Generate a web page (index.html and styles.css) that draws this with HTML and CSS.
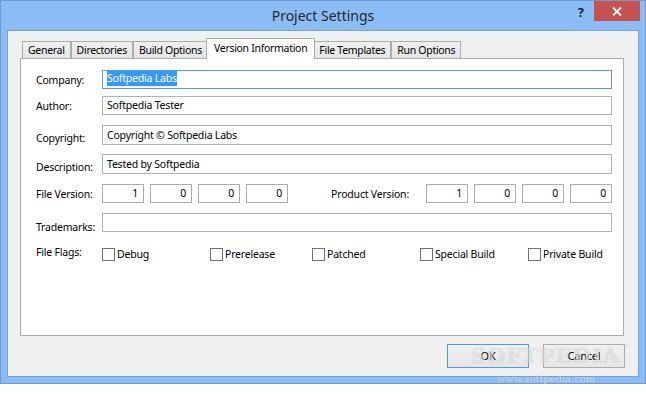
FILE: index.html
```html
<html>
<head>
  <title>Project Settings</title>
  <meta http-equiv="Content-Type" content="text/html; charset=utf-8">
  <link rel="stylesheet" href="styles.css">
</head>
<body>
  <div class="window">
    <div class="titlebar">
      <div></div>
      <div class="title">Project Settings</div>
      <div class="controls">
        <span class="help">?</span>
        <span class="close">
          <svg width="10" height="9" viewBox="0 0 10 9"><path d="M1 0.5 L9 8.5 M9 0.5 L1 8.5" stroke="#fff" stroke-width="1.8" fill="none"/></svg>
        </span>
      </div>
    </div>
    <div class="client">
      <div class="tabs">
        <div class="tab">General</div>
        <div class="tab">Directories</div>
        <div class="tab">Build Options</div>
        <div class="tab active">Version Information</div>
        <div class="tab">File Templates</div>
        <div class="tab">Run Options</div>
      </div>
      <div class="panel">
        <div class="row r-company">
          <div class="lbl">Company:</div>
          <div class="field focus"><span class="sel">Softpedia Labs</span></div>
        </div>
        <div class="row r-author">
          <div class="lbl">Author:</div>
          <div class="field">Softpedia Tester</div>
        </div>
        <div class="row r-copy">
          <div class="lbl lbl-low">Copyright:</div>
          <div class="field tall">Copyright © Softpedia Labs</div>
        </div>
        <div class="row r-desc">
          <div class="lbl lbl-low">Description:</div>
          <div class="field tall">Tested by Softpedia</div>
        </div>
        <div class="row r-version">
          <div class="lbl">File Version:</div>
          <div class="nums">
            <div class="num">1</div>
            <div class="num">0</div>
            <div class="num">0</div>
            <div class="num">0</div>
          </div>
          <div class="lbl prod-lbl">Product Version:</div>
          <div class="nums">
            <div class="num">1</div>
            <div class="num">0</div>
            <div class="num">0</div>
            <div class="num">0</div>
          </div>
        </div>
        <div class="row r-trade">
          <div class="lbl lbl-lower">Trademarks:</div>
          <div class="field"></div>
        </div>
        <div class="row r-flags">
          <div class="lbl flags-lbl">File Flags:</div>
          <div class="flags">
            <div class="flag"><span class="check"></span>Debug</div>
            <div class="flag"><span class="check"></span>Prerelease</div>
            <div class="flag"><span class="check"></span>Patched</div>
            <div class="flag"><span class="check"></span>Special Build</div>
            <div class="flag"><span class="check"></span>Private Build</div>
          </div>
        </div>
      </div>
      <div class="buttons">
        <div class="btn default">OK</div>
        <div class="btn">Cancel</div>
      </div>
    </div>
    <div class="watermark">
      <div class="wm-logo">SOFTPEDIA<sup>™</sup></div>
      <div class="wm-url">www.softpedia.com</div>
    </div>
  </div>
</body>
</html>
```

FILE: styles.css
```css
html {
  box-sizing: border-box;
}
*, *:before, *:after {
  box-sizing: inherit;
}
body {
  margin: 0;
  padding: 0;
  width: 646px;
  height: 395px;
  background: #fff;
  font-family: "Noto Sans", "Open Sans", sans-serif;
  font-size: 10.5px;
  letter-spacing: -0.2px;
  color: #000;
}
.window {
  position: relative;
  width: 646px;
  height: 384px;
  border: 1px solid #6f9bcf;
  background: #8abcf6;
}
.titlebar {
  height: 29px;
  display: grid;
  grid-template-columns: 1fr auto 1fr;
}
.title {
  font-size: 14px;
  letter-spacing: 0;
  line-height: 29px;
  color: #262626;
}
.controls {
  justify-self: end;
  display: flex;
  align-items: flex-start;
}
.help {
  margin-top: 3px;
  margin-right: 10px;
  font-size: 13px;
  font-weight: bold;
  letter-spacing: 0;
  color: #222;
  line-height: 16px;
}
.close {
  width: 46px;
  height: 20px;
  margin-right: 5px;
  background: #c75050;
  display: flex;
  align-items: center;
  justify-content: center;
}
.close svg {
  display: block;
  margin-top: 1px;
}
.client {
  margin: 0 6px 6px;
  height: 347px;
  border: 1px solid #74a2d8;
  background: #f0f0f0;
  padding: 7px 14px 0 12px;
}
.tabs {
  display: flex;
  align-items: flex-end;
  height: 20px;
  padding-left: 2px;
  position: relative;
  z-index: 1;
  letter-spacing: -0.3px;
}
.tab {
  height: 17px;
  line-height: 16px;
  padding: 0 5px;
  border: 1px solid #acacac;
  border-bottom: none;
  background: linear-gradient(#f0f0f0, #e5e5e5);
  white-space: nowrap;
}
.tab.active {
  height: 21px;
  line-height: 19px;
  margin: 0 -2px -1px;
  padding: 0 7px;
  background: #fff;
  position: relative;
  z-index: 2;
}
.panel {
  height: 278px;
  border: 1px solid #acacac;
  background: #fff;
  padding: 11px 11px 0 15px;
}
.row {
  display: flex;
  align-items: flex-start;
  height: 19px;
}
.lbl {
  width: 66px;
  flex: none;
  line-height: 19px;
  margin-top: 1px;
  white-space: nowrap;
}
.lbl-low {
  margin-top: 4px;
}
.lbl-lower {
  margin-top: 5px;
}
.field {
  flex: 1;
  height: 19px;
  border: 1px solid #abb3bf;
  padding-left: 4px;
  line-height: 17px;
  white-space: nowrap;
}
.field.tall {
  height: 20px;
  line-height: 18px;
}
.field.focus {
  border-color: #569de5;
}
.sel {
  display: inline-block;
  background: #3399ff;
  color: #fff;
  line-height: 15px;
  vertical-align: top;
}
.r-author {
  margin-top: 7px;
}
.r-copy {
  margin-top: 10px;
  height: 20px;
}
.r-desc {
  margin-top: 9px;
  height: 20px;
}
.r-version {
  margin-top: 10px;
}
.r-trade {
  margin-top: 10px;
}
.r-flags {
  margin-top: 16px;
  height: 13px;
  align-items: center;
}
.nums {
  display: flex;
  gap: 6px;
}
.num {
  width: 42px;
  height: 19px;
  border: 1px solid #acacac;
  text-align: right;
  padding-right: 5px;
  line-height: 17px;
}
.prod-lbl {
  width: auto;
  margin-left: auto;
  margin-right: 17px;
}
.flags-lbl {
  margin-top: 0;
  margin-bottom: 4px;
}
.flags {
  flex: 1;
  display: grid;
  grid-template-columns: 108px 102px 108px 108px auto;
}
.flag {
  display: flex;
  align-items: center;
  height: 13px;
  line-height: 13px;
  white-space: nowrap;
}
.check {
  width: 13px;
  height: 13px;
  border: 1px solid #707070;
  background: #fff;
  margin-right: 2px;
  flex: none;
}
.buttons {
  display: flex;
  justify-content: flex-end;
  gap: 14px;
  margin-top: 8px;
  margin-right: -1px;
}
.btn {
  width: 82px;
  height: 24px;
  border: 1px solid #acacac;
  background: linear-gradient(#f0f0f0, #e5e5e5);
  text-align: center;
  line-height: 22px;
  font-size: 11px;
}
.btn.default {
  border-color: #4b9ae6;
}
.watermark {
  position: absolute;
  left: 470px;
  top: 340px;
  width: 150px;
  pointer-events: none;
  text-align: center;
}
.wm-logo {
  font-family: "DejaVu Serif", serif;
  font-size: 21px;
  font-weight: bold;
  letter-spacing: 1px;
  line-height: 30px;
  color: rgba(255, 255, 255, 0.5);
  text-shadow: 0 0 1px rgba(90, 90, 90, 0.3);
}
.wm-logo sup {
  font-size: 9px;
  vertical-align: top;
  line-height: 12px;
}
.wm-url {
  font-family: "DejaVu Serif", serif;
  font-size: 10px;
  letter-spacing: 0;
  line-height: 12px;
  margin-top: 2px;
  color: rgba(255, 255, 255, 0.6);
  text-shadow: 0 0 1px rgba(90, 90, 90, 0.3);
}
```
